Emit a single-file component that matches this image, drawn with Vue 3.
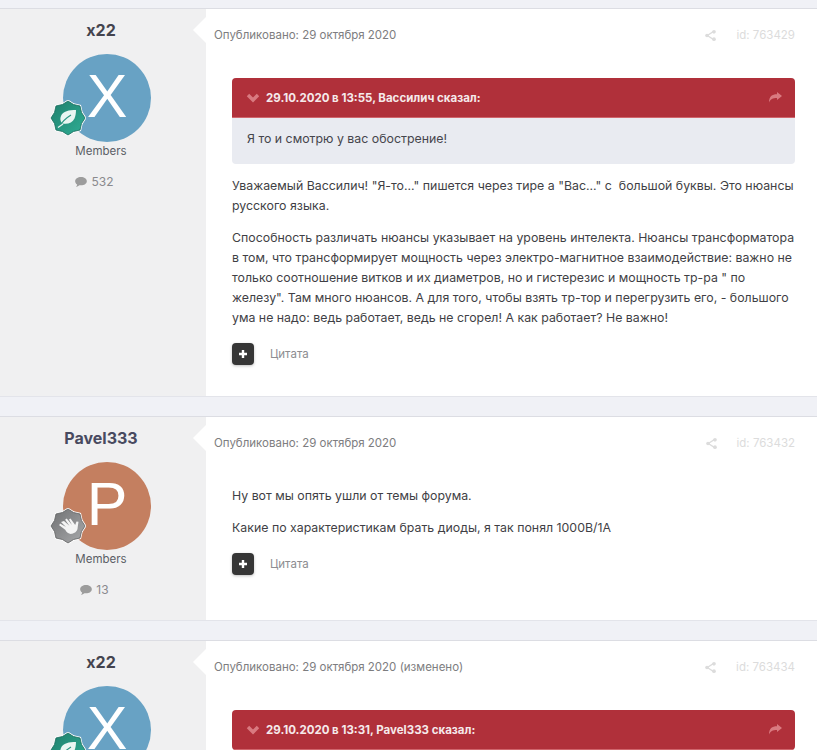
<template>
  <div class="topic">
    <article v-for="post in posts" :key="post.id" class="post">
      <aside class="author">
        <h3 class="author-name" :class="{ 'is-blue': post.author === 'Pavel333' }">{{ post.author }}</h3>
        <div class="avatar" :style="{ background: post.color }">
          {{ post.letter }}
          <svg class="rank" viewBox="0 0 36 36">
            <defs>
              <linearGradient :id="'rank-' + post.id" x1="0" y1="0" x2="1" y2="1">
                <stop offset="0" :stop-color="post.rank === 'leaf' ? '#1f7f6c' : '#6f7072'" />
                <stop offset="1" :stop-color="post.rank === 'leaf' ? '#2fae95' : '#a9aaac'" />
              </linearGradient>
            </defs>
            <polygon :points="rankPoints" fill="#fff" stroke="#fff" stroke-width="2.400" stroke-linejoin="round" />
            <polygon :points="rankPoints" :fill="'url(#rank-' + post.id + ')'" :stroke="post.rank === 'leaf' ? '#17695a' : '#5e5f61'" stroke-width="0.800" stroke-linejoin="round" />
            <g v-if="post.rank === 'leaf'">
              <path d="M26 10c-7 0-13 1-15 6-1.500 3.500 0 6 1.500 7.500 5 1 10-.5 12-5 1-2.500 1.500-5.500 1.500-8.500z" fill="#e9f6f2" />
              <path d="M9 27c3-5 7-9 12-12" fill="none" stroke="#2a9682" stroke-width="1.200" />
              <path d="M8 27.500l5-3.500" fill="none" stroke="#e9f6f2" stroke-width="1.200" />
            </g>
            <path v-else d="M11 14l5 5-6-3.500-.8 1.800 6 4.500c1.500 3 4 4.700 7 4 3.500-.8 5.500-3.500 5.500-6.500l.8-5.500-2-.3-1.300 3.500-4.700-6.500-1.500 1 3 5.500-5.300-6.500-1.600 1.200 4.300 6-5.400-4.800z" fill="#f4f4f4" />
          </svg>
        </div>
        <template v-if="post.paragraphs.length">
          <div class="author-group">Members</div>
          <div class="author-count">
            <svg class="comment-icon" viewBox="0 0 14 12">
              <path d="M7 0c3.800 0 7 2.200 7 5s-3.200 5-7 5c-.7 0-1.300-.1-1.900-.2C4 10.800 2.600 11.600 1 12c.8-.9 1.300-1.900 1.400-3C.9 8 0 6.600 0 5c0-2.800 3.200-5 7-5z" fill="#9c9c9c" />
            </svg>
            {{ post.count }}
          </div>
        </template>
      </aside>

      <div class="content">
        <span class="notch"></span>
        <header class="post-meta">
          <span class="post-date">Опубликовано: 29 октября 2020<template v-if="post.edited"> (изменено)</template></span>
          <span class="post-tools">
            <svg class="share-icon" viewBox="0 0 12 12">
              <path d="M9.500 1.500L2.500 6l7 4.500" fill="none" stroke="#dcdcdc" stroke-width="1.300" />
              <circle cx="9.800" cy="2" r="2" fill="#dcdcdc" />
              <circle cx="2.200" cy="6" r="2" fill="#dcdcdc" />
              <circle cx="9.800" cy="10" r="2" fill="#dcdcdc" />
            </svg>
            <span class="post-id">id: {{ post.id }}</span>
          </span>
        </header>

        <div class="post-body">
          <section v-if="post.quote" class="quote">
            <div class="quote-head">
              <svg class="quote-chevron" viewBox="0 0 14 10">
                <path d="M2 2l5 5 5-5" fill="none" stroke="#d97a80" stroke-width="3.400" />
              </svg>
              <span class="quote-title">{{ post.quote.title }}</span>
              <svg class="quote-arrow" viewBox="0 0 13 11">
                <path d="M13 4L8 0v2.300C3 2.300 0 4.500 0 10.500c1.200-3.400 3.800-4.600 8-4.600V8z" fill="#d97a80" />
              </svg>
            </div>
            <div v-if="post.quote.text" class="quote-text">{{ post.quote.text }}</div>
          </section>

          <p v-for="(para, i) in post.paragraphs" :key="i" class="para">
            <span v-for="(line, j) in para" :key="j" class="para-line">{{ line }}</span>
          </p>

          <div v-if="post.paragraphs.length" class="actions">
            <button class="plus-btn">
              <svg viewBox="0 0 10 10"><path d="M5 1v8M1 5h8" stroke="#fff" stroke-width="2.400" /></svg>
            </button>
            <span class="quote-link">Цитата</span>
          </div>
        </div>
      </div>
    </article>
  </div>
</template>

<script setup>
const posts = [
  {
    id: 763429,
    author: 'x22',
    letter: 'X',
    color: '#68a2c4',
    rank: 'leaf',
    count: 532,
    quote: {
      title: '29.10.2020 в 13:55, Вассилич сказал:',
      text: 'Я то и смотрю у вас обострение!',
    },
    paragraphs: [
      [
        'Уважаемый Вассилич! "Я-то..." пишется через тире а "Вас..." с  большой буквы. Это нюансы',
        'русского языка.',
      ],
      [
        'Способность различать нюансы указывает на уровень интелекта. Нюансы трансформатора',
        'в том, что трансформирует мощность через электро-магнитное взаимодействие: важно не',
        'только соотношение витков и их диаметров, но и гистерезис и мощность тр-ра " по',
        'железу". Там много нюансов. А для того, чтобы взять тр-тор и перегрузить его, - большого',
        'ума не надо: ведь работает, ведь не сгорел! А как работает? Не важно!',
      ],
    ],
  },
  {
    id: 763432,
    author: 'Pavel333',
    letter: 'P',
    color: '#c47f60',
    rank: 'hand',
    count: 13,
    paragraphs: [
      ['Ну вот мы опять ушли от темы форума.'],
      ['Какие по характеристикам брать диоды, я так понял 1000В/1А'],
    ],
  },
  {
    // only the top of this one is on screen
    id: 763434,
    author: 'x22',
    letter: 'X',
    color: '#68a2c4',
    rank: 'leaf',
    count: 532,
    edited: true,
    quote: {
      title: '29.10.2020 в 13:31, Pavel333 сказал:',
    },
    paragraphs: [],
  },
]

// scalloped 8-point rank badge
const rankPoints = Array.from({ length: 16 }, (_, i) => {
  const angle = (Math.PI / 8) * i - Math.PI / 2
  const r = i % 2 === 0 ? 17 : 14.6
  return `${(18 + r * Math.cos(angle)).toFixed(2)},${(18 + r * Math.sin(angle)).toFixed(2)}`
}).join(' ')
</script>

<style>
html,
body {
  margin: 0;
  background: #f0f1f6;
  overflow: hidden;
}
</style>

<style scoped>
.topic {
  display: flex;
  flex-direction: column;
  gap: 21px;
  padding-top: 9px;
  height: 741px;
  overflow: hidden;
  background: #f0f1f6;
  font-family: Inter, "Noto Sans", sans-serif;
}

.post {
  display: flex;
  flex-shrink: 0;
  background: #fff;
  border-top: 1px solid #dcdde3;
  margin-top: -1px;
  box-shadow: 0 1px 0 #e3e4ea;
}

.author {
  box-sizing: border-box;
  width: 206px;
  flex-shrink: 0;
  padding: 10px 4px 22px 0;
  background: #f0f0f1;
  display: flex;
  flex-direction: column;
  align-items: center;
}

.author-name {
  margin: 0;
  font-size: 16px;
  line-height: 22px;
  font-weight: 700;
  color: #44444e;
}

.author-name.is-blue {
  color: #484a60;
}

.avatar {
  position: relative;
  box-sizing: border-box;
  width: 88px;
  height: 88px;
  margin: 13px 0 0 12px;
  padding-bottom: 3px;
  border-radius: 50%;
  display: flex;
  align-items: center;
  justify-content: center;
  color: #fff;
  font-family: "Liberation Sans", Arial, sans-serif;
  font-size: 61px;
  line-height: 1;
}

.rank {
  position: absolute;
  left: -13px;
  top: 46px;
  width: 36px;
  height: 36px;
}

.author-group {
  margin-top: 1px;
  font-size: 11.500px;
  line-height: 16px;
  color: #5b5e66;
}

.author-count {
  margin: 15px 13px 0 0;
  display: flex;
  align-items: center;
  gap: 4px;
  font-size: 12px;
  line-height: 16px;
  color: #8a8a8e;
}

.comment-icon {
  width: 12px;
  height: 10px;
}

.content {
  position: relative;
  flex: 1;
  min-width: 0;
  padding: 0 22px 0 8px;
}

.notch {
  position: absolute;
  left: -13px;
  top: 8px;
  width: 0;
  height: 0;
  border-style: solid;
  border-width: 13px 13px 13px 0;
  border-color: transparent #fff transparent transparent;
}

.post-meta {
  display: flex;
  justify-content: space-between;
  align-items: center;
  height: 18px;
  margin-top: 17px;
  font-size: 11.500px;
  color: #7d7d80;
}

.post-tools {
  display: flex;
  align-items: center;
  gap: 20px;
  color: #dcdcdc;
}

.share-icon {
  width: 11px;
  height: 11px;
}

.post-body {
  padding: 34px 0 31px 18px;
}

.quote {
  border-radius: 4px;
  background: #e9ebf1;
  overflow: hidden;
  margin-bottom: 12px;
}

.quote-head {
  height: 40px;
  padding: 0 14px;
  display: flex;
  align-items: center;
  background: #b0303a;
  border-bottom: 1px solid #d0656c;
  box-sizing: border-box;
}

.quote-chevron {
  width: 14px;
  height: 10px;
  margin-right: 6px;
}

.quote-title {
  flex: 1;
  font-size: 11.500px;
  font-weight: 700;
  color: #f5e9ea;
}

.quote-arrow {
  width: 13px;
  height: 11px;
  margin-right: -1px;
}

.quote-text {
  padding: 12px 15px 17px;
  font-size: 12.350px;
  line-height: 17px;
  color: #45454c;
}

.para {
  margin: 0 0 12px;
  font-size: 12.350px;
  line-height: 20px;
  color: #3f3f45;
}

.para-line {
  display: block;
  white-space: pre;
}

.actions {
  display: flex;
  align-items: center;
  gap: 16px;
  margin-top: 15px;
}

.plus-btn {
  width: 22px;
  height: 22px;
  padding: 0;
  border: none;
  border-radius: 4px;
  background: #363636;
  box-shadow: 0 1px 3px rgba(0, 0, 0, 0.25);
  display: flex;
  align-items: center;
  justify-content: center;
}

.plus-btn svg {
  width: 10px;
  height: 10px;
}

.quote-link {
  font-size: 11.500px;
  color: #8d8d91;
}
</style>
